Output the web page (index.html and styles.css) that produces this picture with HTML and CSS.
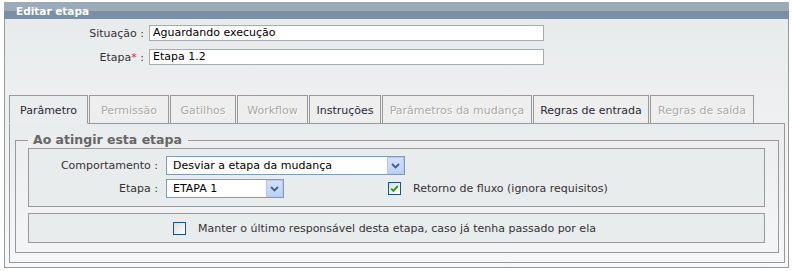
FILE: index.html
```html
<!DOCTYPE html>
<html lang="pt-BR">
<head>
<meta charset="utf-8">
<title>Editar etapa</title>
<link rel="stylesheet" href="styles.css">
</head>
<body>
<div class="panel">
  <div class="panel-head">Editar etapa</div>
  <div class="panel-body">
    <div class="form">
      <div class="frow">
        <span class="flabel">Situação :</span>
        <div class="input">Aguardando execução</div>
      </div>
      <div class="frow">
        <span class="flabel">Etapa<span class="req">*</span> :</span>
        <div class="input">Etapa 1.2</div>
      </div>
    </div>

    <div class="tabs">
      <div class="tab active tab-parametro">Parâmetro</div>
      <div class="tab disabled tab-permissao">Permissão</div>
      <div class="tab disabled tab-gatilhos">Gatilhos</div>
      <div class="tab disabled tab-workflow">Workflow</div>
      <div class="tab tab-instrucoes">Instruções</div>
      <div class="tab disabled tab-mudanca">Parâmetros da mudança</div>
      <div class="tab tab-entrada">Regras de entrada</div>
      <div class="tab disabled tab-saida">Regras de saída</div>
    </div>

    <div class="tabpanel">
      <fieldset class="group">
        <legend>Ao atingir esta etapa</legend>
        <div class="box box-fields">
          <div class="brow">
            <span class="blabel">Comportamento :</span>
            <div class="select select-wide">
              <span class="select-text">Desviar a etapa da mudança</span>
              <span class="select-btn"><svg width="9" height="6" viewBox="0 0 9 6"><path d="M1 1 L4.5 4.5 L8 1" fill="none" stroke="#4a5d80" stroke-width="1.8"/></svg></span>
            </div>
          </div>
          <div class="brow">
            <span class="blabel">Etapa :</span>
            <div class="select select-narrow">
              <span class="select-text">ETAPA 1</span>
              <span class="select-btn"><svg width="9" height="6" viewBox="0 0 9 6"><path d="M1 1 L4.5 4.5 L8 1" fill="none" stroke="#4a5d80" stroke-width="1.8"/></svg></span>
            </div>
            <div class="check-item check-flow">
              <span class="checkbox"><svg width="11" height="11" viewBox="0 0 11 11"><path d="M2.2 5.6 L4.4 7.8 L8.8 3" fill="none" stroke="#21a121" stroke-width="1.9"/></svg></span>
              <span class="check-label">Retorno de fluxo (ignora requisitos)</span>
            </div>
          </div>
        </div>
        <div class="box box-keep">
          <div class="check-item">
            <span class="checkbox"></span>
            <span class="check-label">Manter o último responsável desta etapa, caso já tenha passado por ela</span>
          </div>
        </div>
      </fieldset>
    </div>
  </div>
</div>
</body>
</html>
```

FILE: styles.css
```css
* { box-sizing: border-box; }

html, body {
  margin: 0;
  padding: 0;
  background: #ffffff;
}

body {
  font-family: "DejaVu Sans", Verdana, sans-serif;
  font-size: 11px;
  color: #333333;
  padding-top: 2px;
}

.panel {
  margin-left: 4px;
  width: 785px;
}

.panel-head {
  height: 17px;
  padding: 2px 0 0 12px;
  line-height: 15px;
  background: linear-gradient(#9babb9 0, #9babb9 9px, #7a8fa5 9px, #7a8fa5 100%);
  color: #ffffff;
  font-weight: bold;
  font-size: 10.5px;
}

.panel-body {
  border: 1px solid #999999;
  border-top: 0;
  background: linear-gradient(#e8ebec, #f7f8f9);
  padding: 6px 3px 4px 4px;
}

/* top form */
.form {
  display: flex;
  flex-direction: column;
  gap: 8px;
}

.frow {
  display: flex;
  align-items: center;
  height: 16px;
}

.flabel {
  width: 139px;
  margin-left: -4px;
  margin-right: 5px;
  text-align: right;
  color: #333333;
}

.req { color: #e8222a; }

.input {
  width: 395px;
  height: 16px;
  border: 1px solid #a5acb2;
  background: #ffffff;
  padding-left: 3px;
  line-height: 14px;
  color: #000000;
}

/* tabs */
.tabs {
  display: flex;
  margin-top: 30px;
  margin-bottom: -1px;
  position: relative;
  z-index: 1;
}

.tab {
  height: 29px;
  padding: 2px 0 0;
  line-height: 25px;
  margin-right: 1px;
  border: 1px solid #999999;
  background: #eeeeee;
  color: #2a2a33;
  text-align: center;
  white-space: nowrap;
  overflow: hidden;
}

.tab-parametro { width: 79px; }
.tab-permissao { width: 80px; }
.tab-gatilhos { width: 66px; }
.tab-workflow { width: 71px; }
.tab-instrucoes { width: 72px; }
.tab-mudanca { width: 150px; }
.tab-entrada { width: 116px; }
.tab-saida { width: 104px; }

.tab.disabled {
  color: #a8a8a8;
  text-shadow: 1px 1px 0 #ffffff;
}

.tab.active {
  background: #eaedee;
  border-bottom-color: #eaedee;
}

.tabpanel {
  border: 1px solid #999999;
  background: linear-gradient(#e9eced, #f6f7f8);
  padding: 8px 5px 9px 5px;
}

/* fieldset */
.group {
  margin: 0;
  min-width: 0;
  border: 1px solid #999999;
  padding: 0 13px 9px 12px;
  background: linear-gradient(#eceeef, #f4f5f6);
}

.group legend {
  padding: 0 6px 0 5px;
  font-size: 12.5px;
  line-height: 16px;
  font-weight: bold;
  color: #666666;
}

.box {
  border: 1px solid #999999;
  background: #e9eced;
}

.box-fields {
  padding: 7px 0 8px 0;
  display: flex;
  flex-direction: column;
  gap: 4px;
}

.brow {
  display: flex;
  align-items: center;
  height: 19px;
}

.blabel {
  width: 129px;
  margin-right: 8px;
  text-align: right;
  color: #333333;
}

.select {
  height: 19px;
  border: 1px solid #7f9db9;
  background: #ffffff;
  display: flex;
  align-items: center;
  color: #000000;
}

.select-wide { width: 239px; }
.select-narrow { width: 118px; }

.select-text {
  flex: 1;
  padding-left: 6px;
  white-space: nowrap;
  overflow: hidden;
}

.select-btn {
  width: 17px;
  height: 17px;
  border: 1px solid #b7c9ee;
  background: linear-gradient(#d3e0fb, #bcd0f7);
  display: flex;
  align-items: center;
  justify-content: center;
}

.check-item {
  display: flex;
  align-items: center;
  gap: 12px;
}

.check-flow { margin-left: 104px; }

.checkbox {
  width: 13px;
  height: 13px;
  border: 1px solid #1c5180;
  background: linear-gradient(135deg, #dcdcd7, #ffffff);
  display: flex;
  align-items: center;
  justify-content: center;
}

.check-label {
  color: #333333;
  white-space: nowrap;
}

.box-keep {
  margin-top: 6px;
  height: 30px;
  display: flex;
  align-items: center;
  padding-left: 144px;
}
```
